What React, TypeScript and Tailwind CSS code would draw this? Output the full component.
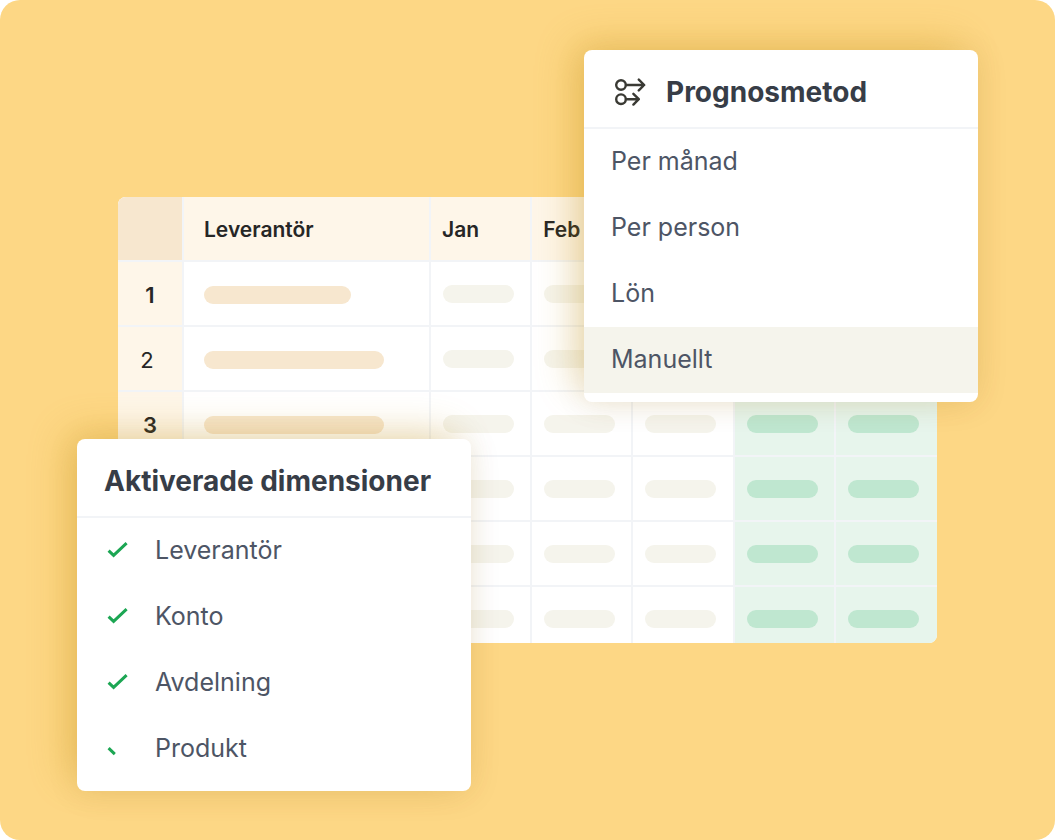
import type { ReactNode } from "react";
import clsx from "clsx";

const months = ["Jan", "Feb", "", "", ""];

const rows = [
  { label: "1", bold: true, bar: "w-[147px]" },
  { label: "2", bold: false, bar: "w-[180px]" },
  { label: "3", bold: true, bar: "w-[180px]" },
  { label: "", bold: false, bar: "w-[180px]" },
  { label: "", bold: false, bar: "w-[180px]" },
  { label: "", bold: false, bar: "w-[180px]" }
];

const methods = ["Per månad", "Per person", "Lön", "Manuellt"];

const dimensions = [
  { label: "Leverantör", done: true },
  { label: "Konto", done: true },
  { label: "Avdelning", done: true },
  { label: "Produkt", done: false }
];

function ForecastIcon() {
  return (
    <svg className="h-7 w-8" viewBox="0 0 32 28" fill="none" stroke="#3a3a34" strokeWidth="2.4" strokeLinecap="round" strokeLinejoin="round" aria-hidden="true">
      <circle cx="7" cy="7" r="4.8" />
      <path d="M12 7h18M24.8 1.6 30.2 7l-5.4 5.4" />
      <circle cx="7" cy="21.2" r="4.8" />
      <path d="M12 21.2h12.5M19.4 15.8l5.4 5.4-5.4 5.4" />
    </svg>
  );
}

function Check({ done }: { done: boolean }) {
  return (
    <svg className="pointer-events-none col-start-1 row-start-1 h-4 w-5 overflow-visible" viewBox="0 0 20 16" fill="none" stroke="#1ca653" strokeWidth="3" aria-hidden="true">
      <path d={done ? "M.6 7.6 5.6 12.4 18.6.2" : "M.6 7.2 6.8 13.2"} />
    </svg>
  );
}

function Card({ title, icon, className, children }: { title: string; icon?: ReactNode; className: string; children: ReactNode }) {
  return (
    <section className={clsx("absolute w-[394px] overflow-hidden rounded-lg bg-white pb-[9px] shadow-[-14px_-10px_40px_-6px_rgba(205,150,10,0.32),0_2px_32px_rgba(90,60,20,0.1)]", className)}>
      <header className="flex h-[79px] items-center gap-5 border-b-2 border-[#f2f4f7] pt-1.5">
        {icon}
        <h2 className="text-[28px] leading-9 font-bold text-[#373d47]">{title}</h2>
      </header>
      {children}
    </section>
  );
}

function ForecastTable() {
  return (
    <table className="w-full table-fixed border-separate border-spacing-0 overflow-hidden rounded-lg bg-white text-left text-[21px] text-[#262626]">
      <thead>
        <tr className="h-[65px] bg-[#fef6e9]">
          <td className="w-[66px] border-r-2 border-b-2 border-[#f2f4f7] bg-[#f7e7cf]" />
          <th scope="col" className="w-[247px] border-r-2 border-b-2 border-[#f2f4f7] pt-0.5 pl-5 font-semibold">Leverantör</th>
          {months.map((month, i) => (
            <th key={i} scope="col" className={clsx("border-b-2 border-[#f2f4f7] pt-0.5 pl-[11px] font-semibold", i < 4 && "border-r-2")}>
              {month}
            </th>
          ))}
        </tr>
      </thead>
      <tbody>
        {rows.map((row, r) => (
          <tr key={r} className={r === 5 ? "h-14" : "h-[65px]"}>
            <th scope="row" className={clsx("border-r-2 border-[#f2f4f7] bg-[#fef6e9] pt-1 text-center text-[22px]", r < 5 && "border-b-2", row.bold ? "font-semibold" : "pr-1.5 font-normal")}>
              {row.label}
            </th>
            <td className={clsx("border-r-2 border-[#f2f4f7] pt-6 pl-5 align-top", r < 5 && "border-b-2")}>
              <div className={clsx("h-[18px] rounded-full bg-[#f7e7cf]", row.bar)} />
            </td>
            {months.map((_, i) => (
              <td key={i} className={clsx("border-[#f2f4f7] pt-[23px] pl-3 align-top", r < 5 && "border-b-2", i < 4 && "border-r-2", i > 2 && "bg-[#e7f5ec]")}>
                <div className={clsx("h-[18px] w-[71px] rounded-full", i > 2 ? "bg-[#bfe7d0]" : "bg-[#f5f4ec]")} />
              </td>
            ))}
          </tr>
        ))}
      </tbody>
    </table>
  );
}

export default function App() {
  return (
    <main className="relative flex min-h-screen flex-col justify-center overflow-hidden rounded-[20px] bg-[#fdd785] px-[118px] font-['Inter',sans-serif]">
      <ForecastTable />

      <Card title="Prognosmetod" icon={<ForecastIcon />} className="top-[50px] right-[77px] [&>header]:pl-[30px]">
        <ul>
          {methods.map((method) => (
            <li key={method}>
              <button type="button" className={clsx("h-[66px] w-full px-[27px] text-left text-[25px] text-[#4d5565]", method === "Manuellt" && "bg-[#f5f4ec]")}>
                {method}
              </button>
            </li>
          ))}
        </ul>
      </Card>

      <Card title="Aktiverade dimensioner" className="bottom-[49px] left-[77px] [&>header]:pl-[27px]">
        <ul>
          {dimensions.map(({ label, done }) => (
            <li key={label}>
              <label className="flex h-[66px] items-center gap-[27px] pl-[31px] text-[25px] text-[#4d5565]">
                <span className="grid">
                  <input type="checkbox" defaultChecked={done} className="col-start-1 row-start-1 h-4 w-5 appearance-none" />
                  <Check done={done} />
                </span>
                {label}
              </label>
            </li>
          ))}
        </ul>
      </Card>
    </main>
  );
}
